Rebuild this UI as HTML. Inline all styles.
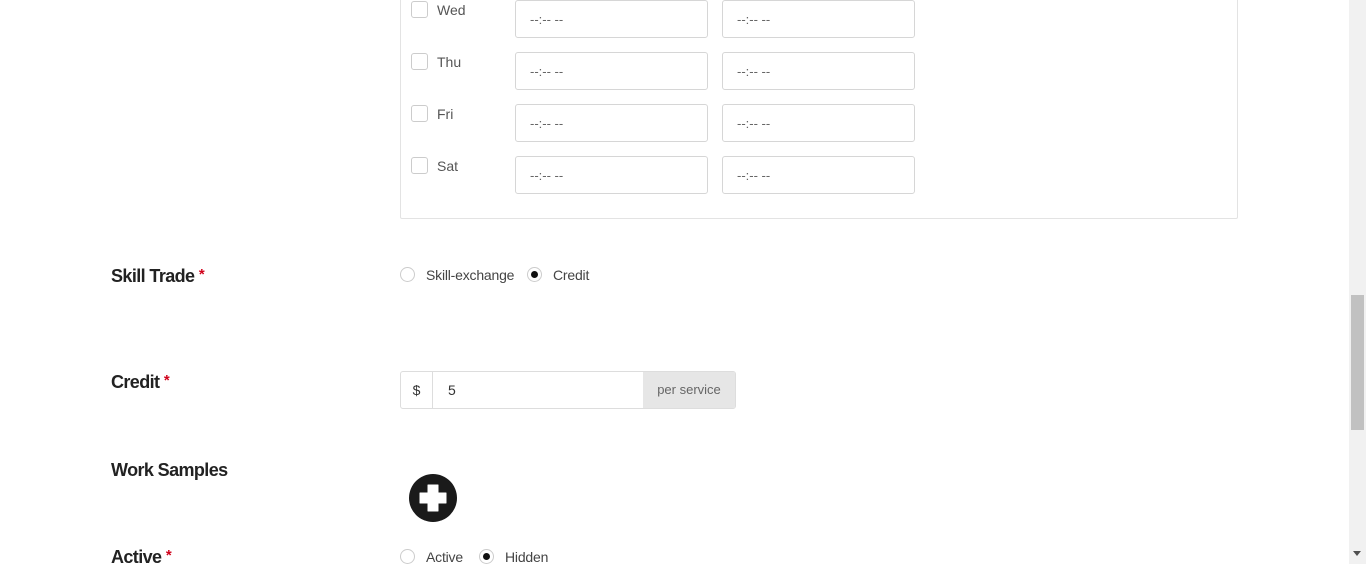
<!DOCTYPE html>
<html><head><style>
body{margin:0;width:1366px;height:564px;overflow:hidden;background:#fff;font-family:"Liberation Sans",sans-serif;position:relative;color:#333}
.a{position:absolute}
.fs{left:400px;top:-10px;width:836px;height:227px;border:1px solid #e3e3e3;border-radius:2px}
.cb{width:15px;height:15px;border:1px solid #ccc;border-radius:3px;background:#fff}
.day{font-size:14px;color:#555}
.in{width:191px;height:36px;border:1px solid #d6d6d6;border-radius:3px;background:#fff;font-size:13px;color:#666;line-height:38px;text-indent:14px;box-sizing:content-box}
.lbl{font-size:18px;color:#222;font-weight:bold;letter-spacing:-0.6px}
.lbl span{color:#d0021b;font-size:15px;vertical-align:3px}
.rd{width:13px;height:13px;border:1px solid #ccc;border-radius:50%;background:#fff}
.rd.on::after{content:"";position:absolute;left:3px;top:3px;width:7px;height:7px;border-radius:50%;background:#111}
.rt{font-size:14px;color:#444;letter-spacing:-0.2px}
</style></head><body>
<div class="a fs"></div>
<div class="a cb" style="left:411px;top:1px"></div><div class="a day" style="left:437px;top:2px">Wed</div>
<div class="a cb" style="left:411px;top:53px"></div><div class="a day" style="left:437px;top:54px">Thu</div>
<div class="a cb" style="left:411px;top:105px"></div><div class="a day" style="left:437px;top:106px">Fri</div>
<div class="a cb" style="left:411px;top:157px"></div><div class="a day" style="left:437px;top:158px">Sat</div>
<div class="a in" style="left:515px;top:0">--:-- --</div><div class="a in" style="left:722px;top:0">--:-- --</div>
<div class="a in" style="left:515px;top:52px">--:-- --</div><div class="a in" style="left:722px;top:52px">--:-- --</div>
<div class="a in" style="left:515px;top:104px">--:-- --</div><div class="a in" style="left:722px;top:104px">--:-- --</div>
<div class="a in" style="left:515px;top:156px">--:-- --</div><div class="a in" style="left:722px;top:156px">--:-- --</div>

<div class="a lbl" style="left:111px;top:266px">Skill Trade <span>*</span></div>
<div class="a rd" style="left:400px;top:267px"></div><div class="a rt" style="left:426px;top:267px">Skill-exchange</div>
<div class="a rd on" style="left:527px;top:267px"></div><div class="a rt" style="left:553px;top:267px">Credit</div>

<div class="a lbl" style="left:111px;top:372px">Credit <span>*</span></div>
<div class="a" style="left:400px;top:371px;width:334px;height:36px;border:1px solid #ddd;border-radius:3px;overflow:hidden;font-size:14px">
<div class="a" style="left:0;top:0;width:31px;height:36px;border-right:1px solid #ddd;text-align:center;line-height:36px;color:#333">$</div>
<div class="a" style="left:47px;top:0;line-height:36px;color:#333">5</div>
<div class="a" style="left:242px;top:0;width:92px;height:36px;background:#e6e6e6;line-height:36px;text-align:center;color:#666;font-size:13px">per service</div>
</div>

<div class="a lbl" style="left:111px;top:460px">Work Samples</div>
<svg class="a" style="left:408px;top:473px" width="50" height="50"><circle cx="25" cy="25" r="24" fill="#1a1a1a"/><path d="M20 12h10v8h8v10h-8v8h-10v-8h-8v-10h8z" fill="#fff" stroke="#fff" stroke-width="1" stroke-linejoin="round"/></svg>

<div class="a lbl" style="left:111px;top:547px">Active <span>*</span></div>
<div class="a rd" style="left:400px;top:549px"></div><div class="a rt" style="left:426px;top:549px">Active</div>
<div class="a rd on" style="left:479px;top:549px"></div><div class="a rt" style="left:505px;top:549px">Hidden</div>

<div class="a" style="left:1349px;top:0;width:17px;height:564px;background:#f1f1f1"></div>
<div class="a" style="left:1351px;top:295px;width:13px;height:135px;background:#c1c1c1"></div>
<div class="a" style="left:1353px;top:551px;width:0;height:0;border-left:4px solid transparent;border-right:4px solid transparent;border-top:5px solid #505050"></div>
</body></html>
